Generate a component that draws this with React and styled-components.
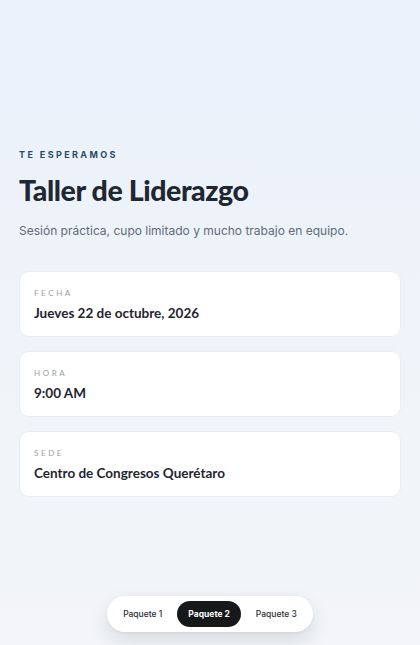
import React, { useState } from "react";
import styled, { createGlobalStyle } from "styled-components";

const GlobalStyle = createGlobalStyle`
  html, body {
    margin: 0;
    padding: 0;
  }
  body {
    font-family: Inter, "Liberation Sans", sans-serif;
    background: linear-gradient(180deg, #eaf1fb 0%, #f0f4f9 60%, #f3f5f8 100%);
    min-height: 100vh;
  }
`;

const details = [
  { label: "Fecha", value: "Jueves 22 de octubre, 2026" },
  { label: "Hora", value: "9:00 AM" },
  { label: "Sede", value: "Centro de Congresos Querétaro" },
];

const packages = ["Paquete 1", "Paquete 2", "Paquete 3"];

const App = () => {
  const [active, setActive] = useState(1);

  return (
    <Page>
      <GlobalStyle />
      <Main>
        <Eyebrow>Te esperamos</Eyebrow>
        <Title>Taller de Liderazgo</Title>
        <Subtitle>Sesión práctica, cupo limitado y mucho trabajo en equipo.</Subtitle>
        <CardList>
          {details.map((item) => (
            <Card key={item.label}>
              <CardLabel>{item.label}</CardLabel>
              <CardValue>{item.value}</CardValue>
            </Card>
          ))}
        </CardList>
      </Main>
      <NavWrap>
        <Nav>
          {packages.map((name, i) => (
            <NavButton
              key={name}
              $active={i === active}
              onClick={() => setActive(i)}
            >
              {name}
            </NavButton>
          ))}
        </Nav>
      </NavWrap>
    </Page>
  );
};

export default App;

const Page = styled.div`
  min-height: 100vh;
  display: flex;
  flex-direction: column;
  box-sizing: border-box;
`;

const Main = styled.main`
  flex: 1;
  padding: 149px 19px 0;
  display: flex;
  flex-direction: column;
`;

const Eyebrow = styled.p`
  margin: 0;
  font-size: 9px;
  line-height: 11px;
  font-weight: 700;
  letter-spacing: 2.4px;
  text-transform: uppercase;
  color: #2a4a6c;
`;

const Title = styled.h1`
  margin: 13px 0 0;
  font-family: Lato, "Noto Sans", sans-serif;
  font-weight: 900;
  font-size: 28.5px;
  line-height: 34px;
  letter-spacing: -0.4px;
  color: #1f2733;
`;

const Subtitle = styled.p`
  margin: 15px 0 0;
  font-size: 12px;
  line-height: 18px;
  color: #626b77;
`;

const CardList = styled.div`
  margin-top: 31px;
  display: flex;
  flex-direction: column;
  gap: 14px;
`;

const Card = styled.div`
  background: #ffffff;
  border: 1px solid #e8edf3;
  border-radius: 10px;
  padding: 16px 14px 18px;
  height: 66px;
  box-sizing: border-box;
`;

const CardLabel = styled.div`
  font-family: Lato, "Noto Sans", sans-serif;
  font-size: 8px;
  line-height: 10px;
  letter-spacing: 2.6px;
  text-transform: uppercase;
  color: #9a9fa6;
`;

const CardValue = styled.div`
  margin-top: 6px;
  font-family: Lato, "Noto Sans", sans-serif;
  font-weight: 700;
  font-size: 13.5px;
  line-height: 18px;
  color: #1f2430;
`;

const NavWrap = styled.div`
  display: flex;
  justify-content: center;
  padding-bottom: 13px;
`;

const Nav = styled.nav`
  display: flex;
  align-items: center;
  gap: 4px;
  padding: 5px;
  background: #ffffff;
  border-radius: 999px;
  box-shadow: 0 8px 20px rgba(20, 30, 45, 0.12), 0 1px 3px rgba(20, 30, 45, 0.06);
`;

const NavButton = styled.button`
  border: none;
  cursor: pointer;
  height: 26px;
  padding: 0 11px;
  border-radius: 999px;
  font-family: Inter, "Liberation Sans", sans-serif;
  font-size: 8.5px;
  font-weight: ${(p) => (p.$active ? 700 : 500)};
  color: ${(p) => (p.$active ? "#ffffff" : "#2a2d33")};
  background: ${(p) => (p.$active ? "#17181a" : "transparent")};
`;
